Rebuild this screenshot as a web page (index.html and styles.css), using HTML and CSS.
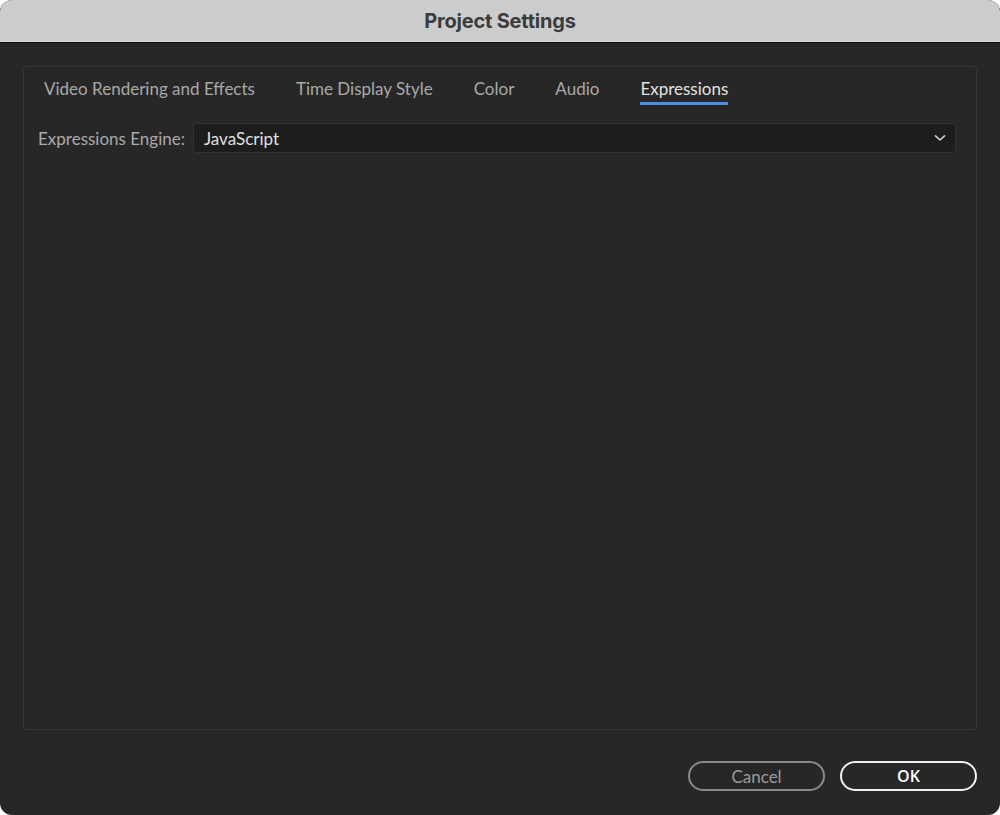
FILE: index.html
```html
<!DOCTYPE html>
<html>
<head>
<meta charset="utf-8">
<title>Project Settings</title>
<link rel="stylesheet" href="styles.css">
</head>
<body>
<div class="window">
  <div class="titlebar">Project Settings</div>
  <div class="content">
    <div class="panel">
      <div class="tabs">
        <div class="tab">Video Rendering and Effects</div>
        <div class="tab">Time Display Style</div>
        <div class="tab">Color</div>
        <div class="tab">Audio</div>
        <div class="tab active">Expressions</div>
      </div>
      <div class="row">
        <span class="label">Expressions Engine:</span>
        <div class="select">
          <span class="value">JavaScript</span>
          <svg class="chev" width="12" height="8" viewBox="0 0 12 8"><path d="M1.5 1.8 L6 6 L10.5 1.8" fill="none" stroke="#cfcfcf" stroke-width="1.6" stroke-linecap="round" stroke-linejoin="round"/></svg>
        </div>
      </div>
    </div>
    <div class="buttons">
      <div class="btn cancel">Cancel</div>
      <div class="btn ok">OK</div>
    </div>
  </div>
</div>
</body>
</html>
```

FILE: styles.css
```css
html, body {
  margin: 0;
  padding: 0;
  background: #ffffff;
}
.window {
  width: 1000px;
  height: 815px;
  border-radius: 12px;
  overflow: hidden;
  background: #272727;
  display: flex;
  flex-direction: column;
  font-family: Lato, "Open Sans", sans-serif;
}
.titlebar {
  height: 42px;
  box-sizing: border-box;
  background: #cbcccd;
  border-bottom: 1px solid #dcdcdc;
  box-shadow: 0 1px 0 #0c0c0c;
  display: flex;
  align-items: center;
  justify-content: center;
  font-family: Inter, "Liberation Sans", sans-serif;
  font-weight: 700;
  font-size: 20px;
  letter-spacing: -0.2px;
  color: #3b3b3b;
}
.content {
  flex: 1;
  display: flex;
  flex-direction: column;
  padding: 24px 23px 24px 23px;
}
.panel {
  flex: 1;
  border: 1px solid #353535;
  border-radius: 3px;
  display: flex;
  flex-direction: column;
}
.tabs {
  display: flex;
  gap: 41px;
  padding: 10px 20px 0 20px;
}
.tab {
  font-size: 17px;
  line-height: 24px;
  color: #a9a9a9;
  padding-bottom: 1px;
  border-bottom: 3px solid transparent;
}
.tab.active {
  color: #e2e2e2;
  border-bottom-color: #4b8de4;
}
.row {
  display: flex;
  align-items: center;
  gap: 8px;
  margin-top: 18px;
  padding: 0 20px 0 14px;
}
.label {
  font-size: 17px;
  color: #a9a9a9;
}
.select {
  flex: 1;
  height: 30px;
  box-sizing: border-box;
  background: #1d1d1d;
  border: 1px solid #343434;
  border-radius: 4px;
  display: flex;
  align-items: center;
  justify-content: space-between;
  padding: 0 9px 0 10px;
}
.value {
  font-size: 17px;
  color: #e0e0e0;
}
.chev {
  display: block;
}
.buttons {
  display: flex;
  justify-content: flex-end;
  gap: 15px;
  margin-top: 31px;
}
.btn {
  width: 137px;
  height: 30px;
  box-sizing: border-box;
  border-radius: 15px;
  display: flex;
  align-items: center;
  justify-content: center;
  font-size: 17px;
}
.cancel {
  border: 2px solid #8a8a8a;
  color: #9c9c9c;
}
.ok {
  border: 2px solid #f2f2f2;
  color: #ffffff;
  font-family: "Open Sans", Lato, sans-serif;
  font-weight: 600;
  font-size: 16px;
}
```
